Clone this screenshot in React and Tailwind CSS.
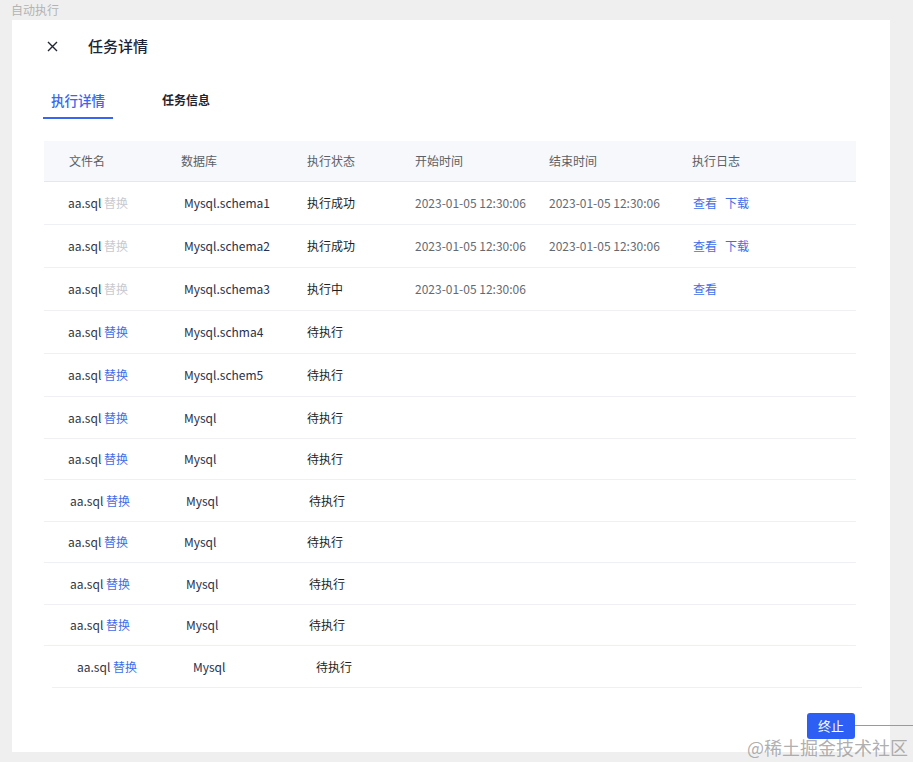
import React from 'react';

const font = { fontFamily: '"Noto Sans CJK SC", "Noto Sans", sans-serif' };

const rows = [
  { db: 'Mysql.schema1', status: '执行成功', start: '2023-01-05 12:30:06', end: '2023-01-05 12:30:06', log: ['查看', '下载'], done: true, h: 'h-[43px]', pad: 'pl-[24px]' },
  { db: 'Mysql.schema2', status: '执行成功', start: '2023-01-05 12:30:06', end: '2023-01-05 12:30:06', log: ['查看', '下载'], done: true, h: 'h-[43px]', pad: 'pl-[24px]' },
  { db: 'Mysql.schema3', status: '执行中', start: '2023-01-05 12:30:06', end: '', log: ['查看'], done: true, h: 'h-[43px]', pad: 'pl-[24px]' },
  { db: 'Mysql.schma4', status: '待执行', h: 'h-[43px]', pad: 'pl-[24px]' },
  { db: 'Mysql.schem5', status: '待执行', h: 'h-[43px]', pad: 'pl-[24px]' },
  { db: 'Mysql', status: '待执行', h: 'h-[42px]', pad: 'pl-[24px]' },
  { db: 'Mysql', status: '待执行', h: 'h-[41px]', pad: 'pl-[24px]' },
  { db: 'Mysql', status: '待执行', h: 'h-[42px]', pad: 'pl-[26px]' },
  { db: 'Mysql', status: '待执行', h: 'h-[41px]', pad: 'pl-[24px]' },
  { db: 'Mysql', status: '待执行', h: 'h-[42px]', pad: 'pl-[26px]' },
  { db: 'Mysql', status: '待执行', h: 'h-[41px]', pad: 'pl-[26px]' },
  { db: 'Mysql', status: '待执行', h: 'h-[42px]', pad: 'pl-[25px]', last: true },
];

function Row({ r }) {
  return (
    <div className={`flex items-center border-b border-[#eef0f3] text-[12px] ${r.h} ${r.pad} ${r.last ? 'ml-[8px] mr-[-6px]' : ''}`}>
      <div className="w-[116px] text-[#2f3542]">
        aa.sql <span className={r.done ? 'text-[#c8cacf]' : 'text-[#3f6fe8]'}>替换</span>
      </div>
      <div className="w-[123px] text-[#28304a]">{r.db}</div>
      <div className="w-[108px] text-[#1d1f24]">{r.status}</div>
      <div className="w-[134px] text-[#666a70]">{r.start || ''}</div>
      <div className="w-[144px] text-[#666a70]">{r.end || ''}</div>
      <div className="flex gap-[8px] text-[#3f6fe8]">
        {(r.log || []).map((l) => (
          <span key={l}>{l}</span>
        ))}
      </div>
    </div>
  );
}

export default function App() {
  return (
    <div className="relative w-[913px] h-[762px] bg-[#efefef] overflow-hidden" style={font}>
      <div className="h-[20px] pl-[11px] text-[12px] leading-[20px] text-[#b3b3b3]">自动执行</div>
      <div className="ml-[12px] w-[878px] h-[732px] bg-white flex flex-col">
        {/* Header */}
        <div className="flex items-center h-[52px] pt-[1px]">
          <svg className="ml-[35px]" width="11" height="11" viewBox="0 0 11 11" fill="none" stroke="#1f2533" strokeWidth="1.4">
            <path d="M1 1l9 9M10 1l-9 9" />
          </svg>
          <span className="ml-[30px] text-[15px] font-medium text-[#1c2336]">任务详情</span>
        </div>

        {/* Tabs */}
        <div className="flex items-end h-[47px] ml-[31px]">
          <div className="w-[70px] flex flex-col items-center">
            <span className="text-[13.5px] font-medium text-[#3866ef] leading-[20px]">执行详情</span>
            <div className="mt-[7px] h-[2px] w-[70px] bg-[#3866ef]" />
          </div>
          <div className="ml-[49px] pb-[9px] text-[12px] font-bold text-[#1f2330] leading-[20px]">任务信息</div>
        </div>

        {/* Table */}
        <div className="mt-[22px] ml-[32px] w-[812px]">
          <div className="flex items-center h-[41px] pl-[25px] bg-[#f6f8fb] border-b border-[#e4e7ec] text-[12px] text-[#5a5f68]">
            <div className="w-[112px]">文件名</div>
            <div className="w-[126px]">数据库</div>
            <div className="w-[108px]">执行状态</div>
            <div className="w-[134px]">开始时间</div>
            <div className="w-[143px]">结束时间</div>
            <div>执行日志</div>
          </div>
          {rows.map((r, i) => (
            <Row key={i} r={r} />
          ))}
        </div>
      </div>

      {/* footer button and connector line */}
      <button className="absolute left-[807px] top-[713px] w-[48px] h-[26px] rounded-[3px] bg-[#2d5ff5] text-white text-[13px] leading-[26px]">
        终止
      </button>
      <div className="absolute left-[855px] top-[725px] w-[58px] h-[1px] bg-[#9a9a9a]" />

      {/* watermark */}
      <div className="absolute left-[747px] top-[735px] text-[18px] leading-[24px] text-[#9a9a9a]/80">
        @稀土掘金技术社区
      </div>
    </div>
  );
}
